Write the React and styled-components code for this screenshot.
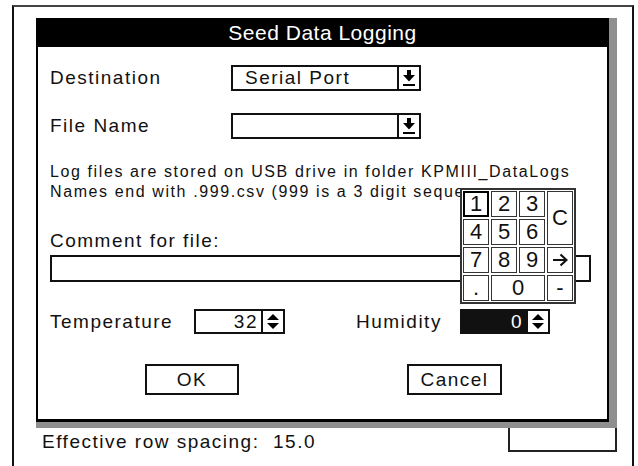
import styled, { createGlobalStyle } from "styled-components";

const GlobalStyle = createGlobalStyle`
  html, body {
    margin: 0;
    padding: 0;
    background: #fff;
  }
  body {
    font-family: "Liberation Sans", Arial, Helvetica, sans-serif;
    color: #111;
  }
`;

const Screen = styled.div`
  width: 638px;
  height: 466px;
  overflow: hidden;
  box-sizing: border-box;
  padding: 5px 0 0 12px;
`;

const BackWindow = styled.div`
  width: 622px;
  height: 500px;
  box-sizing: border-box;
  border: 2px solid #111;
  border-top-color: #444;
  border-bottom: none;
  padding: 11px 0 0 22px;
`;

// the gray drop shadow is drawn as thick right/bottom borders of this frame
const DialogStack = styled.div`
  position: relative;
  z-index: 1;
  width: 581px;
  box-sizing: border-box;
  border-right: 8px solid #8f8f8f;
  border-bottom: 6px solid #8f8f8f;
`;

const Dialog = styled.div`
  position: relative;
  width: 573px;
  height: 404px;
  box-sizing: border-box;
  border: 2px solid #000;
  border-bottom-width: 3px;
  background: #fff;
  display: flex;
  flex-direction: column;
`;

const TitleBar = styled.div`
  margin: -2px -2px 0;
  height: 29px;
  background: #000;
  color: #fff;
  display: flex;
  align-items: center;
  justify-content: center;
  font-size: 21px;
  letter-spacing: 0.5px;
`;

const Body = styled.div`
  padding: 0 12px;
  display: flex;
  flex-direction: column;
`;

const FieldRow = styled.div`
  display: flex;
  align-items: center;
  height: ${(p) => p.$h || 26}px;
  margin-top: ${(p) => p.$mt}px;
`;

const Label = styled.span`
  width: ${(p) => p.$w}px;
  margin-left: ${(p) => p.$ml || 0}px;
  font-size: 19px;
  letter-spacing: 1.5px;
  flex-shrink: 0;
`;

const Dropdown = styled.div`
  width: 190px;
  height: 26px;
  box-sizing: border-box;
  border: 2px solid #111;
  display: flex;
  align-items: stretch;
`;

const DropValue = styled.div`
  flex: 1;
  padding-left: 12px;
  font-size: 19px;
  letter-spacing: 1.5px;
  line-height: 22px;
`;

const DropButton = styled.div`
  width: 20px;
  border-left: 2px solid #111;
  display: flex;
  align-items: center;
  justify-content: center;
`;

const InfoText = styled.p`
  margin: 23px 0 0;
  font-size: 16px;
  letter-spacing: 1.6px;
  line-height: 20px;
  white-space: nowrap;
`;

const CommentLabel = styled.div`
  margin-top: 29px;
  font-size: 19px;
  letter-spacing: 1.5px;
  line-height: 20px;
`;

const CommentInput = styled.div`
  margin-top: 4px;
  width: 541px;
  height: 27px;
  box-sizing: border-box;
  border: 2px solid #111;
`;

const SpinBox = styled.div`
  width: ${(p) => p.$w}px;
  height: 25px;
  box-sizing: border-box;
  border: 2px solid #111;
  display: flex;
  background: ${(p) => (p.$selected ? "#111" : "#fff")};
`;

const SpinValue = styled.div`
  flex: 1;
  text-align: right;
  padding-right: 3px;
  font-size: 19px;
  letter-spacing: 1.5px;
  line-height: 21px;
  color: ${(p) => (p.$selected ? "#fff" : "#111")};
`;

const SpinArrows = styled.div`
  width: 20px;
  border-left: 2px solid #111;
  background: #fff;
  display: flex;
  align-items: center;
  justify-content: center;
`;

const ButtonRow = styled.div`
  display: flex;
  margin-top: 30px;
`;

const Button = styled.div`
  width: ${(p) => p.$w}px;
  height: 31px;
  margin-left: ${(p) => p.$ml}px;
  box-sizing: border-box;
  border: 2px solid #111;
  display: flex;
  align-items: center;
  justify-content: center;
  font-size: 19px;
  letter-spacing: 1.5px;
`;

const Keypad = styled.div`
  position: absolute;
  left: 422px;
  top: 168px;
  border: 2px solid #333;
  padding: 1px;
  background: #fff;
  display: grid;
  grid-template-columns: repeat(4, 26px);
  grid-template-rows: repeat(4, 26px);
  gap: 2px;
`;

const Key = styled.div`
  box-sizing: border-box;
  border: ${(p) => (p.$focused ? "2px solid #000" : "1px solid #333")};
  grid-row: ${(p) => p.$row || "auto"};
  grid-column: ${(p) => p.$col || "auto"};
  display: flex;
  align-items: center;
  justify-content: center;
  font-size: 22px;
  line-height: 1;
  color: #111;
`;

const Footer = styled.div`
  width: 581px;
  display: flex;
  justify-content: space-between;
  align-items: flex-start;
`;

const StatusText = styled.div`
  margin-top: 4px;
  padding-left: 6px;
  font-size: 19px;
  letter-spacing: 1.5px;
  line-height: 20px;
`;

const FooterBox = styled.div`
  width: 109px;
  height: 24px;
  box-sizing: border-box;
  border: 2px solid #222;
  border-top: none;
`;

const DropArrow = () => (
  <svg width="12" height="16" viewBox="0 0 12 16">
    <rect x="4" y="0" width="4" height="6" fill="#000" />
    <polygon points="0,5 12,5 6,11.5" fill="#000" />
    <rect x="0" y="14" width="12" height="2" fill="#000" />
  </svg>
);

const UpDown = () => (
  <svg width="12" height="17" viewBox="0 0 12 17">
    <polygon points="6,1 12,7 0,7" fill="#000" />
    <polygon points="0,10 12,10 6,16" fill="#000" />
  </svg>
);

const RightArrow = () => (
  <svg width="16" height="14" viewBox="0 0 16 14">
    <path
      d="M1 7 H14 M8.5 1.5 L14.5 7 L8.5 12.5"
      fill="none"
      stroke="#111"
      strokeWidth="2.2"
    />
  </svg>
);

const keys = [
  { k: "1", focused: true },
  { k: "2" },
  { k: "3" },
  { k: "C", row: "1 / span 2", col: "4" },
  { k: "4" },
  { k: "5" },
  { k: "6" },
  { k: "7" },
  { k: "8" },
  { k: "9" },
  { k: "enter", icon: <RightArrow /> },
  { k: "." },
  { k: "0", col: "2 / span 2" },
  { k: "-" },
];

export default function App() {
  return (
    <>
      <GlobalStyle />
      <Screen>
        <BackWindow>
          <DialogStack>
            <Dialog>
              <TitleBar>Seed Data Logging</TitleBar>
              <Body>
                <FieldRow $mt={18}>
                  <Label $w={181}>Destination</Label>
                  <Dropdown>
                    <DropValue>Serial Port</DropValue>
                    <DropButton>
                      <DropArrow />
                    </DropButton>
                  </Dropdown>
                </FieldRow>
                <FieldRow $mt={22}>
                  <Label $w={181}>File Name</Label>
                  <Dropdown>
                    <DropValue />
                    <DropButton>
                      <DropArrow />
                    </DropButton>
                  </Dropdown>
                </FieldRow>
                <InfoText>
                  Log files are stored on USB drive in folder KPMIII_DataLogs
                  <br />
                  Names end with .999.csv (999 is a 3 digit seque
                </InfoText>
                <CommentLabel>Comment for file:</CommentLabel>
                <CommentInput />
                <FieldRow $mt={27} $h={25}>
                  <Label $w={144}>Temperature</Label>
                  <SpinBox $w={91}>
                    <SpinValue>32</SpinValue>
                    <SpinArrows>
                      <UpDown />
                    </SpinArrows>
                  </SpinBox>
                  <Label $w={104} $ml={71}>
                    Humidity
                  </Label>
                  <SpinBox $w={90} $selected>
                    <SpinValue $selected>0</SpinValue>
                    <SpinArrows>
                      <UpDown />
                    </SpinArrows>
                  </SpinBox>
                </FieldRow>
                <ButtonRow>
                  <Button $w={94} $ml={95}>
                    OK
                  </Button>
                  <Button $w={95} $ml={168}>
                    Cancel
                  </Button>
                </ButtonRow>
              </Body>
              <Keypad>
                {keys.map((key) => (
                  <Key
                    key={key.k}
                    $focused={key.focused}
                    $row={key.row}
                    $col={key.col}
                  >
                    {key.icon || key.k}
                  </Key>
                ))}
              </Keypad>
            </Dialog>
          </DialogStack>
          <Footer>
            <StatusText>Effective row spacing:&nbsp; 15.0</StatusText>
            <FooterBox />
          </Footer>
        </BackWindow>
      </Screen>
    </>
  );
}
